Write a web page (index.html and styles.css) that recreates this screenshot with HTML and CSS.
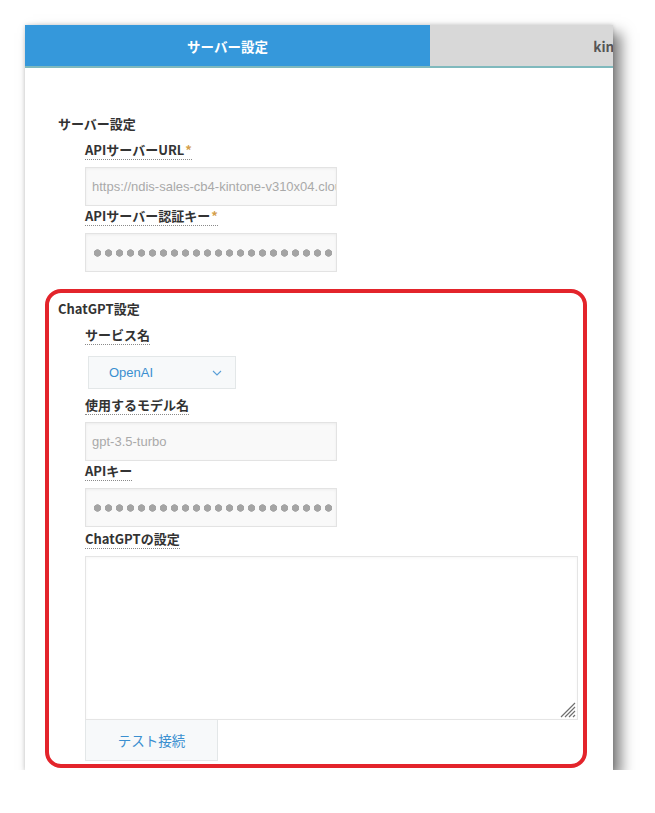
FILE: index.html
```html
<!DOCTYPE html>
<html lang="ja">
<head>
<meta charset="utf-8">
<title>設定</title>
<link rel="stylesheet" href="styles.css">
</head>
<body>
<div class="panel">
  <div class="tabs">
    <div class="tab tab-active">サーバー設定</div>
    <div class="tab">kintone設定</div>
  </div>
  <div class="content">
    <section class="group">
      <h2 class="group-title">サーバー設定</h2>
      <div class="field">
        <span class="label">APIサーバーURL<span class="req">*</span></span>
        <div class="input input-text">https://ndis-sales-cb4-kintone-v310x04.cloud</div>
      </div>
      <div class="field">
        <span class="label">APIサーバー認証キー<span class="req">*</span></span>
        <div class="input"><span class="dots"></span></div>
      </div>
    </section>

    <section class="group group-marked">
      <h2 class="group-title">ChatGPT設定</h2>
      <div class="field">
        <span class="label">サービス名</span>
        <div class="select">
          <span class="select-value">OpenAI</span>
          <svg class="chevron" width="10" height="6" viewBox="0 0 10 6"><path d="M1 1 L5 5 L9 1" fill="none" stroke="#5a9fd8" stroke-width="1.1"/></svg>
        </div>
      </div>
      <div class="field">
        <span class="label">使用するモデル名</span>
        <div class="input input-text">gpt-3.5-turbo</div>
      </div>
      <div class="field">
        <span class="label">APIキー</span>
        <div class="input"><span class="dots"></span></div>
      </div>
      <div class="field field-last">
        <span class="label">ChatGPTの設定</span>
        <div class="textarea">
          <svg class="grip" width="18" height="18" viewBox="0 0 18 18"><path d="M17 3 L3 17 M17 7 L7 17 M17 11 L11 17 M17 15 L15 17" stroke="#6f6f6f" stroke-width="1.2" fill="none"/></svg>
        </div>
        <button class="button" type="button">テスト接続</button>
      </div>
    </section>
  </div>
</div>
</body>
</html>
```

FILE: styles.css
```css
* { box-sizing: border-box; }
html, body { margin: 0; padding: 0; background: #ffffff; }
body {
  font-family: "Noto Sans CJK JP", "Noto Sans", sans-serif;
  color: #333333;
  padding: 25px 0 0 25px;
}
.panel {
  width: 588px;
  height: 745px;
  background: #ffffff;
  overflow: hidden;
  box-shadow: 8px 8px 13px rgba(0, 0, 0, 0.5), 0 0 4px rgba(0, 0, 0, 0.18);
}
.tabs {
  display: flex;
  width: 810px;
  border-bottom: 2px solid #7fb9bd;
}
.tab {
  flex: 0 0 405px;
  height: 41px;
  display: flex;
  align-items: center;
  justify-content: center;
  background: #d8d8d8;
  color: #555555;
  font-weight: bold;
  font-size: 13.5px;
}
.tab-active {
  background: #3598db;
  color: #ffffff;
}
.content {
  padding-top: 47px;
}
.group {
  padding-left: 33px;
}
.group-title {
  margin: 0 0 8px 0;
  font-size: 13px;
  line-height: 18px;
  font-weight: bold;
  color: #333333;
}
.group-marked {
  margin: 17px 0 0 20px;
  width: 542px;
  border: 4px solid #e3242b;
  border-radius: 16px;
  padding: 7px 0 3px 9px;
}
.field {
  margin: 1px 0 0 27px;
  display: flex;
  flex-direction: column;
  align-items: flex-start;
}
.field-last { margin-top: 3px; }
.label {
  font-size: 13px;
  line-height: 18px;
  font-weight: bold;
  color: #333333;
  border-bottom: 1px dotted #8a8a8a;
  margin-bottom: 7px;
}
.req {
  color: #d4a04c;
  margin-left: 1px;
}
.input {
  width: 252px;
  height: 39px;
  background: #f9f9f9;
  border: 1px solid #e3e3e3;
  box-shadow: inset 0 1px 3px rgba(0, 0, 0, 0.05);
  padding: 0 4px 0 6px;
  display: flex;
  align-items: center;
  overflow: hidden;
}
.input-text {
  font-family: "Liberation Sans", "Noto Sans", sans-serif;
  font-size: 13px;
  color: #a9a9a9;
  white-space: nowrap;
}
.dots {
  display: block;
  width: 238px;
  height: 8px;
  margin-left: 2px;
  background: radial-gradient(circle at 3.5px 4px, #a4a4a4 3.4px, rgba(164, 164, 164, 0) 4px) 0 0 / 11px 8px repeat-x;
}
.select {
  width: 148px;
  height: 33px;
  margin: 4px 0 6px 3px;
  background: #f7f9fa;
  border: 1px solid #e3e7e8;
  display: flex;
  align-items: center;
  justify-content: space-between;
  padding: 0 13px 0 20px;
}
.select-value {
  font-family: "Liberation Sans", "Noto Sans", sans-serif;
  font-size: 13px;
  color: #3a8fd0;
}
.chevron { display: block; }
.textarea {
  position: relative;
  width: 493px;
  height: 164px;
  background: #ffffff;
  border: 1px solid #e5e5e5;
  box-shadow: inset 0 1px 3px rgba(0, 0, 0, 0.04);
}
.grip {
  position: absolute;
  right: 1px;
  bottom: 1px;
}
.button {
  width: 133px;
  height: 41px;
  margin: 0;
  background: #f7f9fa;
  border: 1px solid #e3e7e8;
  border-top: 0;
  font-family: "Noto Sans CJK JP", sans-serif;
  font-size: 13.5px;
  color: #3a8fd0;
  padding: 0;
}
```
